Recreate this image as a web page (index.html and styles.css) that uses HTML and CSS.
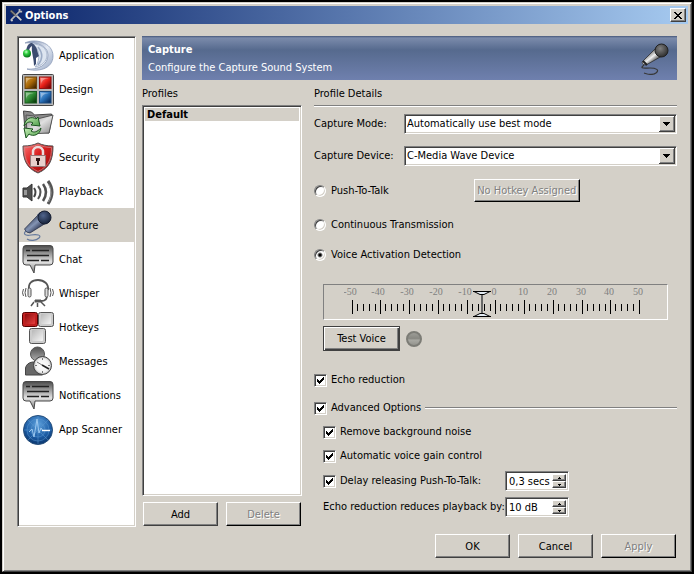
FILE: index.html
```html
<!DOCTYPE html>
<html lang="en">
<head>
  <meta charset="UTF-8">
  <meta name="viewport" content="width=device-width, initial-scale=1.0">
  <title>Options</title>
  <link rel="stylesheet" href="styles.css">
</head>
<body>
  <!-- shared icons -->
  <svg class="defs" aria-hidden="true">
    <defs>
      <linearGradient id="metal" x1="0" y1="0" x2="0" y2="1">
        <stop offset="0" stop-color="#4a4a4a"/><stop offset=".3" stop-color="#999"/><stop offset=".6" stop-color="#e2e2e2"/><stop offset="1" stop-color="#777"/>
      </linearGradient>
      <linearGradient id="key" x1="0" y1="0" x2="1" y2="1">
        <stop offset="0" stop-color="#b8b8b8"/><stop offset="1" stop-color="#f4f4f4"/>
      </linearGradient>
      <linearGradient id="folder" x1="0" y1="0" x2="1" y2="1">
        <stop offset="0" stop-color="#8c8c8c"/><stop offset=".5" stop-color="#e0e0e0"/><stop offset="1" stop-color="#888"/>
      </linearGradient>
      <linearGradient id="red" x1="0" y1="0" x2="1" y2="1">
        <stop offset="0" stop-color="#f77"/><stop offset=".45" stop-color="#d81e1e"/><stop offset="1" stop-color="#8c0808"/>
      </linearGradient>
      <linearGradient id="keyRed" x1="0" y1="0" x2="1" y2="1">
        <stop offset="0" stop-color="#8c0c0c"/><stop offset="1" stop-color="#e84040"/>
      </linearGradient>
      <linearGradient id="orange" x1="0" y1="0" x2="1" y2="1">
        <stop offset="0" stop-color="#d8a040"/><stop offset=".5" stop-color="#a86808"/><stop offset="1" stop-color="#2c1800"/>
      </linearGradient>
      <linearGradient id="green" x1="0" y1="0" x2="1" y2="1">
        <stop offset="0" stop-color="#78b878"/><stop offset=".5" stop-color="#2c8830"/><stop offset="1" stop-color="#022802"/>
      </linearGradient>
      <linearGradient id="blue" x1="0" y1="0" x2="1" y2="1">
        <stop offset="0" stop-color="#80b4e8"/><stop offset=".5" stop-color="#2870b8"/><stop offset="1" stop-color="#001c48"/>
      </linearGradient>
      <linearGradient id="scarlet" x1="0" y1="0" x2="1" y2="1">
        <stop offset="0" stop-color="#ff8c80"/><stop offset=".5" stop-color="#e82018"/><stop offset="1" stop-color="#500"/>
      </linearGradient>
      <linearGradient id="arrow" x1="0" y1="0" x2="1" y2="1">
        <stop offset="0" stop-color="#c8f0b8"/><stop offset="1" stop-color="#4c9c48"/>
      </linearGradient>
      <radialGradient id="globe" cx=".5" cy=".3" r=".75">
        <stop offset="0" stop-color="#5ca0dc"/><stop offset=".6" stop-color="#1c5ca4"/><stop offset="1" stop-color="#062c60"/>
      </radialGradient>
      <linearGradient id="pearl" x1="0" y1="0" x2="1" y2="1">
        <stop offset="0" stop-color="#7484a8"/><stop offset=".5" stop-color="#e4eaf4"/><stop offset="1" stop-color="#98a8c4"/>
      </linearGradient>
      <radialGradient id="ball" cx=".4" cy=".3" r=".7">
        <stop offset="0" stop-color="#c8ffc8"/><stop offset=".4" stop-color="#30d040"/><stop offset="1" stop-color="#067018"/>
      </radialGradient>
      <linearGradient id="handle" x1="0" y1="0" x2="1" y2="1">
        <stop offset=".2" stop-color="#303a54"/><stop offset=".48" stop-color="#8494b4"/><stop offset=".75" stop-color="#28304c"/>
      </linearGradient>
      <radialGradient id="micHead" cx=".4" cy=".35" r=".65">
        <stop offset="0" stop-color="#50648c"/><stop offset="1" stop-color="#18243c"/>
      </radialGradient>
      <linearGradient id="handleGray" x1="0" y1="0" x2="1" y2="1">
        <stop offset=".2" stop-color="#383838"/><stop offset=".5" stop-color="#f0f0f0"/><stop offset=".75" stop-color="#303030"/>
      </linearGradient>
      <radialGradient id="headGray" cx=".4" cy=".35" r=".65">
        <stop offset="0" stop-color="#808080"/><stop offset="1" stop-color="#303030"/>
      </radialGradient>
      <linearGradient id="person" x1="0" y1="0" x2="0" y2="1">
        <stop offset="0" stop-color="#505050"/><stop offset="1" stop-color="#b0b0b0"/>
      </linearGradient>
      <radialGradient id="face">
        <stop offset="0" stop-color="#fff"/><stop offset=".75" stop-color="#f0f0f0"/><stop offset="1" stop-color="#b0b0b0"/>
      </radialGradient>
      <symbol id="bubble" viewBox="0 0 32 32">
        <path d="M4 1.500h24q3 0 3 3V18q0 3-3 3H13l-1 8-4-8H4q-3 0-3-3V4.500q0-3 3-3z" fill="url(#metal)" stroke="#484848"/>
        <path d="M4 6.500h4M10 6.500h17M5 11.500h22M5 16.500h12M19 16.500h8" stroke="#222" stroke-width="1.600"/>
      </symbol>
    </defs>
  </svg>

  <div class="window">
    <header class="titlebar">
      <svg class="title-icon" viewBox="0 0 16 16" fill="none">
        <path d="M3 13L12 4M12 1v3h3" stroke="#b8b8b8" stroke-width="2"/>
        <path d="M2 3l5 5" stroke="#444" stroke-width="3"/>
        <path d="M2 3l12 11" stroke="#888" stroke-width="1.500"/>
        <path d="M2 13l2 2M9 9l5 5" stroke="#ccc" stroke-width="2"/>
      </svg>
      <h1>Options</h1>
      <button class="close" type="button" aria-label="Close">
        <svg viewBox="0 0 8 7" shape-rendering="crispEdges"><path d="M0 0h2v1h1v1h2V1h1V0h2v1H7v1H6v1H5v1h1v1h1v1h1v1H6V6H5V5H3v1H2v1H0V6h1V5h1V4h1V3H2V2H1V1H0z"/></svg>
      </button>
    </header>

    <div class="content">
      <nav class="sidebar">
        <button type="button">
          <svg viewBox="0 0 32 32">
            <path d="M3 3C12-2 31 2 31 16S14 32 5 29C16 30 26 25 26 15S14 2 3 3z" fill="url(#pearl)" stroke="#8090b0" stroke-width=".7"/>
            <path d="M10 4c10 0 15 5 15 11s-5 11-12 12c5-5 6-18-3-23z" fill="#dde5f0" stroke="#a8b6ce"/>
            <path d="M16 7c5 6 5 12 0 18" stroke="#9cacc6" stroke-width="1.500" fill="none"/>
            <path d="M4 11C5 5 7 3 10 3c6 4 5 9 7 13l-3 2v6l-2 2c0-8-3-14-2-20-2 1-3 3-3 6z" fill="#3c4c70"/>
            <circle cx="5" cy="13.500" r="4" fill="url(#ball)"/>
          </svg>
          Application
        </button>
        <button type="button">
          <svg viewBox="0 0 32 32">
            <rect x=".5" y=".5" width="31" height="31" rx="1" fill="#b8b8b8" stroke="#444"/>
            <rect x="3" y="3" width="11.500" height="11.500" fill="url(#orange)" stroke="#6c4410"/>
            <rect x="17.500" y="3" width="11.500" height="11.500" fill="url(#scarlet)" stroke="#901010"/>
            <rect x="3" y="17.500" width="11.500" height="11.500" fill="url(#green)" stroke="#1c5c20"/>
            <rect x="17.500" y="17.500" width="11.500" height="11.500" fill="url(#blue)" stroke="#1c4c80"/>
            <path d="M4 10c1-4 4-6 10-6H4zM19 10c1-4 4-6 10-6H19zM4 25c1-4 4-6 10-6H4zM19 25c1-4 4-6 10-6H19z" fill="#fff" opacity=".35"/>
          </svg>
          Design
        </button>
        <button type="button">
          <svg viewBox="0 0 32 32">
            <path d="M1.500 3l8 1 3 3 17-1 .5 3-3 16-24-2z" fill="#8c8c8c" stroke="#444"/>
            <path d="M4 7l8 1 3 3 16-4-4 18-22 1z" fill="url(#folder)" stroke="#555"/>
            <path d="M2 18c1-8 8-10 12-7l2-2 2 9-9-1 2-2c-3-2-6-1-9 3z" fill="url(#arrow)" stroke="#1c5420"/>
            <path d="M19 20c-1 7-8 9-12 6l-3 4-2-10 9 1-2 2c3 2 6 1 10-3z" fill="url(#arrow)" stroke="#1c5420"/>
          </svg>
          Downloads
        </button>
        <button type="button">
          <svg viewBox="0 0 32 32">
            <path d="M16 1c4 2 9 3 15 3 0 13-3 22-15 27C4 26 1 17 1 4c6 0 11-1 15-3z" fill="url(#red)" stroke="#555"/>
            <path d="M16 2.500c4 2 9 3 13.500 3 0 12-3 19-13.500 24C5.500 24.500 2.500 17.500 2.500 5.500 7 5.500 12 4.500 16 2.500z" fill="none" stroke="#c88" stroke-width=".8"/>
            <path d="M11 14V10a5 5 0 0 1 10 0v4" fill="none" stroke="#ecdcdc" stroke-width="2.500"/>
            <rect x="8.500" y="13.500" width="15" height="11" fill="#e8d0cc" stroke="#977"/>
            <path d="M14 16h4v3h-1v4h-2v-4h-1z" fill="#2c1414"/>
          </svg>
          Security
        </button>
        <button type="button">
          <svg viewBox="0 0 32 32" fill="none">
            <path d="M1 12h4l5-4v17l-5-4H1z" fill="#505050" stroke="#333"/>
            <path d="M2 14h3v5H2z" fill="#999"/>
            <path d="M12 12q3 4 0 9" stroke="#444" stroke-width="2"/>
            <path d="M16 10q5 6 0 13" stroke="#555" stroke-width="2"/>
            <path d="M21 8q6 8 0 17" stroke="#505050" stroke-width="2.500"/>
            <path d="M26 5q8 11 0 23" stroke="#555" stroke-width="3"/>
            <path d="M26.500 8q5 9 0 18" stroke="#999"/>
          </svg>
          Playback
        </button>
        <button type="button" class="active">
          <svg viewBox="0 0 32 32">
            <path d="M5 20C0 24 3 26 9 25s11 0 8 3-9 3-12 1" fill="none" stroke="#64789c" stroke-width="1.200"/>
            <path d="M2.500 19L16 5l8 8L8 23q-4 0-5.500-4z" fill="url(#handle)" stroke="#202840" stroke-width=".7"/>
            <path d="M15 5l9 9 3-3-9-9z" fill="#3c4c70"/>
            <circle cx="22.500" cy="7.500" r="6.500" fill="url(#micHead)" stroke="#141c30"/>
          </svg>
          Capture
        </button>
        <button type="button">
          <svg><use href="#bubble"/></svg>
          Chat
        </button>
        <button type="button">
          <svg viewBox="0 0 32 32" fill="none" stroke="#555">
            <path d="M7 12C6 5 10 2 16 2s11 4 10 10M25 19c-1 4-4 4-7 4" stroke-width="1.800"/>
            <rect x="6" y="10" width="3" height="9" rx="1.500" fill="#ddd"/>
            <rect x="23" y="10" width="3" height="9" rx="1.500" fill="#ddd"/>
            <path d="M4 10q-2 5 0 9M1.500 11q-2 4 0 7M28 10q2 5 0 9M30.500 11q2 4 0 7"/>
            <path d="M13 22h6v2h-6z" fill="#555"/>
            <path d="M15.500 25v4M12 24l-3 4M19 24l4 4" stroke-width="1.500"/>
          </svg>
          Whisper
        </button>
        <button type="button">
          <svg viewBox="0 0 32 32" stroke="#555">
            <rect x=".5" y=".5" width="15" height="14" rx="2" fill="#c02020" stroke="#500"/>
            <rect x="3" y="2" width="10" height="10" rx="1" fill="url(#keyRed)" stroke="none"/>
            <rect x="16.500" y=".5" width="15" height="14" rx="2" fill="#ccc"/>
            <rect x="19" y="2" width="10" height="10" rx="1" fill="url(#key)" stroke="none"/>
            <rect x="7.500" y="16.500" width="16" height="15" rx="2" fill="#ccc"/>
            <rect x="10" y="18" width="11" height="11" rx="1" fill="url(#key)" stroke="none"/>
          </svg>
          Hotkeys
        </button>
        <button type="button">
          <svg viewBox="0 0 32 32">
            <path d="M3.500 29V22q1-5 7-6h10v13z" fill="#686868" stroke="#444"/>
            <circle cx="15.500" cy="8" r="7" fill="url(#person)" stroke="#555"/>
            <circle cx="20.500" cy="19.500" r="9" fill="url(#face)" stroke="#444"/>
            <path d="M20 19l7 4" stroke="#222" stroke-width="1.500"/>
            <path d="M20 19l-5-3M20.500 12v2M20.500 25v2M13 19.500h2M26 19.500h2" stroke="#777"/>
          </svg>
          Messages
        </button>
        <button type="button">
          <svg><use href="#bubble"/></svg>
          Notifications
        </button>
        <button type="button">
          <svg viewBox="0 0 32 32" fill="none">
            <circle cx="16" cy="16" r="14.500" fill="url(#globe)" stroke="#28507c"/>
            <g stroke="#5c98d0" stroke-width=".5"><circle cx="16" cy="16" r="11"/><circle cx="16" cy="16" r="7"/><path d="M2 16h28M16 2v28M6 6l20 20M26 6L6 26"/></g>
            <path d="M7 18l3-3 2 8 3-18 2 14 2-5 2 3" stroke="#9cc8f0"/>
            <path d="M20 16.500h8" stroke="#fff" stroke-width="1.400"/>
          </svg>
          App Scanner
        </button>
      </nav>

      <div class="page">
        <section class="banner">
          <div>
            <h2>Capture</h2>
            <p>Configure the Capture Sound System</p>
          </div>
          <svg viewBox="0 0 32 32">
            <path d="M5 22C0 26 5 25 11 25s10 2 6 5-9 1-12 0" fill="none" stroke="#383838" stroke-width="1.200"/>
            <path d="M3 19L16 6l7 7L7 22q-4 0-4-3z" fill="url(#handleGray)" stroke="#222" stroke-width=".7"/>
            <path d="M4 18l4 4" stroke="#222" stroke-width="2"/>
            <circle cx="22.500" cy="7.500" r="6.500" fill="url(#headGray)" stroke="#202020"/>
          </svg>
        </section>

        <div class="columns">
          <section class="profiles">
            <h3>Profiles</h3>
            <ul class="profile-list">
              <li><button type="button">Default</button></li>
            </ul>
            <div class="profile-buttons">
              <button class="btn" type="button">Add</button>
              <button class="btn" type="button" disabled>Delete</button>
            </div>
          </section>

          <section class="details">
            <h3>Profile Details</h3>
            <div class="field">
              <label for="mode">Capture Mode:</label>
              <select id="mode"><option>Automatically use best mode</option></select>
            </div>
            <div class="field">
              <label for="device">Capture Device:</label>
              <select id="device"><option>C-Media Wave Device</option></select>
            </div>

            <div class="triggers">
              <div class="push">
                <label class="check"><input type="radio" name="trigger">Push-To-Talk</label>
                <button class="btn" type="button" disabled>No Hotkey Assigned</button>
              </div>
              <label class="check"><input type="radio" name="trigger">Continuous Transmission</label>
              <label class="check"><input type="radio" name="trigger" checked>Voice Activation Detection</label>
            </div>

            <div class="meter">
              <svg viewBox="0 0 304 34" shape-rendering="crispEdges">
                <defs>
                  <path id="major" d="M0 15h1v14H0z"/>
                  <path id="minor" d="M5 19h1v7H5zM11 19h1v7h-1zM17 19h1v7h-1zM23 19h1v7h-1z"/>
                </defs>
                <g class="ticks">
                  <use href="#major" x="8"/><use href="#minor" x="8"/>
                  <use href="#major" x="36"/><use href="#minor" x="36"/>
                  <use href="#major" x="65"/><use href="#minor" x="65"/>
                  <use href="#major" x="94"/><use href="#minor" x="94"/>
                  <use href="#major" x="123"/><use href="#minor" x="123"/>
                  <use href="#major" x="151"/><use href="#minor" x="151"/>
                  <use href="#major" x="180"/><use href="#minor" x="180"/>
                  <use href="#major" x="209"/><use href="#minor" x="209"/>
                  <use href="#major" x="238"/><use href="#minor" x="238"/>
                  <use href="#major" x="266"/><use href="#minor" x="266"/>
                  <use href="#major" x="295"/>
                </g>
                <g class="scale">
                  <text x="6" y="10">-50</text><text x="34" y="10">-40</text><text x="63" y="10">-30</text>
                  <text x="92" y="10">-20</text><text x="121" y="10">-10</text><text x="150" y="10">0</text>
                  <text x="179" y="10">10</text><text x="208" y="10">20</text><text x="237" y="10">30</text>
                  <text x="265" y="10">40</text><text x="294" y="10">50</text>
                </g>
              </svg>
              <input type="range" min="-50" max="50" value="-5" aria-label="Voice activation level">
            </div>
            <div class="test">
              <button class="btn default" type="button">Test Voice</button>
              <span class="led"></span>
            </div>

            <label class="check echo"><input type="checkbox" checked>Echo reduction</label>
            <div class="advanced-title">
              <label class="check"><input type="checkbox" checked>Advanced Options</label>
            </div>
            <div class="advanced">
              <label class="check"><input type="checkbox" checked>Remove background noise</label>
              <label class="check"><input type="checkbox" checked>Automatic voice gain control</label>
              <div class="spin-row">
                <label class="check"><input type="checkbox" checked>Delay releasing Push-To-Talk:</label>
                <div class="spin">
                  <input type="text" value="0,3 secs" aria-label="Release delay">
                  <div class="steps"><button type="button" class="up" aria-label="Increase"></button><button type="button" class="down" aria-label="Decrease"></button></div>
                </div>
              </div>
              <div class="spin-row">
                <label for="reduce">Echo reduction reduces playback by:</label>
                <div class="spin">
                  <input type="text" id="reduce" value="10 dB">
                  <div class="steps"><button type="button" class="up" aria-label="Increase"></button><button type="button" class="down" aria-label="Decrease"></button></div>
                </div>
              </div>
            </div>
          </section>
        </div>
      </div>
    </div>

    <footer class="actions">
      <button class="btn" type="button">OK</button>
      <button class="btn" type="button">Cancel</button>
      <button class="btn" type="button" disabled>Apply</button>
    </footer>
  </div>
</body>
</html>
```
FILE: styles.css
```css
* {
  box-sizing: border-box;
}
body {
  margin: 0;
  padding: 2px;
  min-height: 100vh;
  display: flex;
  background-color: #000;
  color: #000;
}
body, button, input, select {
  font-family: Tahoma, "DejaVu Sans Condensed", "Noto Sans", sans-serif;
  font-size: 11px;
  line-height: 14px;
}
h1, h2, h3, p, ul {
  margin: 0;
  padding: 0;
  font-size: 11px;
}
ul {
  list-style: none;
}
svg {
  display: block;
  flex: none;
}
.defs {
  position: absolute;
  width: 0;
  height: 0;
}
.window {
  flex: 1;
  display: flex;
  flex-direction: column;
  padding: 2px;
  background-color: #d4d0c8;
  border: 1px solid;
  border-color: #d4d0c8 #404040 #404040 #d4d0c8;
  box-shadow: inset 1px 1px #fff, inset -1px -1px #808080;
}

/* title bar */
.titlebar {
  display: flex;
  align-items: center;
  gap: 2px;
  height: 18px;
  margin: 1px;
  padding: 0 2px 0 3px;
  background: linear-gradient(to right, #0a246a, #a6caf0);
  color: #fff;
}
.title-icon {
  width: 14px;
  height: 14px;
}
.titlebar h1 {
  flex: 1;
  padding-top: 1px;
}
.close {
  display: flex;
  align-items: center;
  justify-content: center;
  width: 16px;
  height: 14px;
  padding: 0;
  background-color: #d4d0c8;
  border: 1px solid;
  border-color: #fff #404040 #404040 #fff;
  box-shadow: inset -1px -1px #808080;
}
.close svg {
  width: 8px;
  height: 7px;
}

/* main area */
.content {
  flex: 1;
  display: flex;
  gap: 6px;
  padding: 11px 12px 0 12px;
}
.sidebar {
  width: 119px;
  flex: none;
}
.sidebar, .profile-list, select, .spin {
  background-color: #fff;
  border: 1px solid;
  border-color: #808080 #fff #fff #808080;
  box-shadow: inset 1px 1px #404040, inset -1px -1px #d4d0c8;
  padding: 2px;
}
.sidebar {
  padding: 1px;
}
.sidebar button {
  display: flex;
  align-items: center;
  gap: 5px;
  width: 100%;
  height: 34px;
  padding: 2px 3px 0;
  background: none;
  border: none;
  white-space: nowrap;
}
.sidebar button.active {
  background-color: #d4d0c8;
}
.sidebar svg, .banner svg {
  width: 32px;
  height: 32px;
}
.page {
  flex: 1;
  display: flex;
  flex-direction: column;
}
.banner {
  display: flex;
  justify-content: space-between;
  align-items: center;
  height: 44px;
  padding: 1px 6px 0;
  color: #fff;
  background: linear-gradient(to bottom, #46587a, #7b8bab 2px, #566a8e 14px, #6f80ae);
}
.banner h2 {
  margin-bottom: 4px;
}
.columns {
  flex: 1;
  display: flex;
  gap: 12px;
}
h3 {
  font-weight: normal;
  height: 25px;
  padding-top: 7px;
}
.profiles {
  width: 160px;
  flex: none;
  display: flex;
  flex-direction: column;
}
.profile-list {
  flex: 1;
}
.profile-list button {
  display: block;
  width: 100%;
  padding: 0 2px;
  border: none;
  background-color: #d4d0c8;
  font-weight: bold;
  line-height: 13px;
  text-align: left;
}
.profile-buttons {
  display: flex;
  gap: 8px;
  padding: 6px 1px 1px;
}
.btn {
  width: 75px;
  height: 24px;
  padding: 1px 0 0;
  background-color: #d4d0c8;
  border: 1px solid;
  border-color: #fff #404040 #404040 #fff;
  box-shadow: inset -1px -1px #808080;
}
.btn:disabled {
  color: #808080;
  text-shadow: 1px 1px #fff;
  border-color: #fff #000 #000 #fff;
}

/* profile details */
.details {
  flex: 1;
}
.details h3 {
  border-bottom: 1px solid #808080;
  box-shadow: 0 1px #fff;
  height: 26px;
  margin-bottom: 8px;
}
.field {
  display: flex;
  align-items: center;
  margin-bottom: 12px;
}
.field label {
  width: 90px;
}
select {
  flex: 1;
  height: 20px;
  padding: 0 20px 0 2px;
  appearance: none;
  border-radius: 0;
  color: #000;
  background: #fff url("data:image/svg+xml,%3Csvg xmlns='http://www.w3.org/2000/svg' width='16' height='16' shape-rendering='crispEdges'%3E%3Cpath fill='%23404040' d='M0 0h16v16H0z'/%3E%3Cpath fill='%23fff' d='M0 0h15v15H0z'/%3E%3Cpath fill='%23808080' d='M1 1h14v14H1z'/%3E%3Cpath fill='%23d4d0c8' d='M1 1h13v13H1z'/%3E%3Cpath d='M4 6h7v1h-1v1H9v1H8v1H7V9H6V8H5V7H4z'/%3E%3C/svg%3E") no-repeat right 1px top 1px;
}
.check {
  display: flex;
  align-items: center;
  gap: 4px;
}
.check input {
  appearance: none;
  width: 13px;
  height: 13px;
  margin: 0;
  background: #fff center no-repeat;
  border: 1px solid;
  border-color: #808080 #fff #fff #808080;
  box-shadow: inset 1px 1px #404040, inset -1px -1px #d4d0c8;
}
.check input[type="checkbox"]:checked {
  background-image: url("data:image/svg+xml,%3Csvg xmlns='http://www.w3.org/2000/svg' width='7' height='7' shape-rendering='crispEdges'%3E%3Cpath d='M0 2h1v1h1v1h1V3h1V2h1V1h1V0h1v3H6v1H5v1H4v1H3v1H2V6H1V5H0z'/%3E%3C/svg%3E");
}
.check input[type="radio"] {
  width: 12px;
  height: 12px;
  border-radius: 50%;
  margin-right: 1px;
}
.check input[type="radio"]:checked {
  background-image: radial-gradient(circle, #000 1px, transparent 3px);
}
.triggers {
  display: flex;
  flex-direction: column;
  gap: 16px;
  padding-top: 1px;
}
.push {
  display: flex;
  align-items: center;
  gap: 85px;
  height: 23px;
}
.push .btn {
  width: 106px;
  height: 23px;
}
.meter {
  position: relative;
  height: 36px;
  margin: 22px 9px 0;
  padding-left: 20px;
  border: 1px solid;
  border-color: #808080 #fff #fff #808080;
}
.meter svg {
  width: 304px;
  height: 34px;
}
.scale {
  font-family: "Liberation Serif", serif;
  font-size: 10px;
  fill: #808080;
  text-anchor: middle;
}
/* the slider handle runs over the printed scale */
.meter input {
  position: absolute;
  left: 20px;
  top: 5px;
  width: 304px;
  height: 28px;
  margin: 0;
  appearance: none;
  background: none;
}
.meter input::-webkit-slider-thumb {
  appearance: none;
  width: 18px;
  height: 28px;
  background: url("data:image/svg+xml,%3Csvg xmlns='http://www.w3.org/2000/svg' width='18' height='28'%3E%3Cpath fill='%23666' d='M8 4h2v20H8z'/%3E%3Cpath fill='%23e4ecf4' stroke='%23000' d='M1 1.5h16l-6 3H7zM1 26.500h16l-6-3H7z'/%3E%3Cpath d='M0 1h18v1H0zM0 26h18v1H0z'/%3E%3C/svg%3E");
}
.test {
  display: flex;
  align-items: center;
  gap: 6px;
  margin: 6px 9px 0;
}
.btn.default {
  width: 77px;
  height: 25px;
  border-color: #404040;
  box-shadow: inset 1px 1px #fff, inset -1px -1px #404040, inset -2px -2px #808080;
}
.led {
  width: 16px;
  height: 16px;
  border: 2px solid #7c7c76;
  border-radius: 50%;
  background: linear-gradient(to bottom, #9c9c96, #888882 45%, #a8a8a2 60%, #94948e);
}
.echo {
  margin-top: 22px;
  height: 14px;
}
.advanced-title {
  display: flex;
  align-items: center;
  gap: 4px;
  margin-top: 14px;
}
.advanced-title::after {
  content: "";
  flex: 1;
  height: 2px;
  background: linear-gradient(to bottom, #808080 50%, #fff 50%);
}
.advanced {
  display: flex;
  flex-direction: column;
  gap: 10px;
  padding: 10px 9px 0;
}
.spin-row {
  display: flex;
  align-items: center;
  height: 16px;
}
.spin-row > label {
  width: 182px;
  white-space: nowrap;
}
.spin {
  display: flex;
  width: 64px;
  height: 20px;
}
.spin input {
  width: 44px;
  padding: 1px 0 0 1px;
  border: none;
  background: none;
}
.steps {
  flex: 1;
  display: flex;
  flex-direction: column;
}
.steps button {
  flex: 1;
  padding: 0;
  background: #d4d0c8 center no-repeat;
  border: 1px solid;
  border-color: #fff #404040 #404040 #fff;
  box-shadow: inset -1px -1px #808080;
}
.steps .up {
  background-image: url("data:image/svg+xml,%3Csvg xmlns='http://www.w3.org/2000/svg' width='3' height='2' shape-rendering='crispEdges'%3E%3Cpath d='M1 0h1v1h1v1H0V1h1z'/%3E%3C/svg%3E");
}
.steps .down {
  background-image: url("data:image/svg+xml,%3Csvg xmlns='http://www.w3.org/2000/svg' width='3' height='2' shape-rendering='crispEdges'%3E%3Cpath d='M0 0h3v1H2v1H1V1H0z'/%3E%3C/svg%3E");
}

/* dialog buttons */
.actions {
  display: flex;
  justify-content: flex-end;
  gap: 8px;
  padding: 7px 13px 11px;
}
```
